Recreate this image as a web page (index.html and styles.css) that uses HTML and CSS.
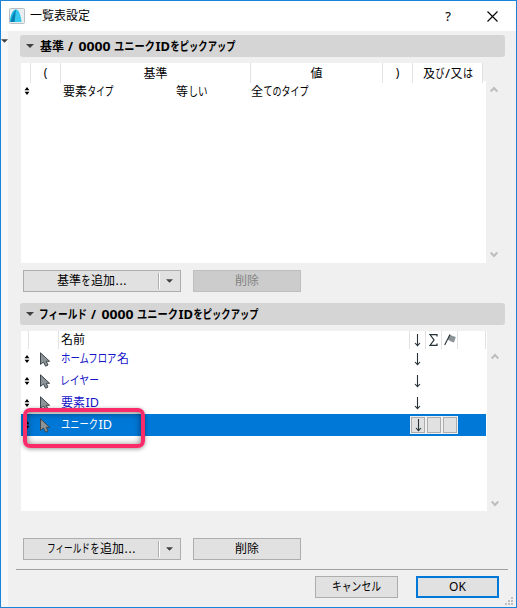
FILE: index.html
```
<!DOCTYPE html>
<html lang="ja">
<head>
<meta charset="utf-8">
<title>一覧表設定</title>
<link rel="stylesheet" href="styles.css">
</head>
<body>
<svg class="defs" width="0" height="0">
  <defs>
    <symbol id="updown" viewBox="0 0 6 10"><path d="M3 0L6 4H0zM0 6H6L3 10z" fill="#000"/></symbol>
    <symbol id="cursor" viewBox="0 0 11 15"><path d="M.5 .8V12.4L3.500 10L5.600 14.200L8 13L6.200 9.300H9.600z" fill="#8d9498" stroke="#3d474d" stroke-width="1"/></symbol>
    <symbol id="down" viewBox="0 0 7 13"><path d="M3.5 0V11.5M1 9L3.5 11.7L6 9" fill="none" stroke="#263238" stroke-width="1.1"/></symbol>
    <symbol id="tri" viewBox="0 0 8 4"><path d="M0 0H8L4 4z" fill="#404040"/></symbol>
    <symbol id="chev" viewBox="0 0 8 7"><path d="M.7 5.5L4 2L7.3 5.5" fill="none" stroke="#bdbdbd" stroke-width="2"/></symbol>
  </defs>
</svg>
<div class="window">
  <header class="titlebar">
    <svg class="logo" width="16" height="16" viewBox="0 0 16 16"><rect x=".5" y=".5" width="15" height="15" rx="1" fill="#e9eef0" stroke="#b9c0c3"/><path d="M1 14C1 7 4 1.5 7 1.5L8 14z" fill="#16b8e8"/><path d="M5 14C4.500 7 5.500 2 7 1.500C10 1.500 12 8 12.500 14z" fill="#35c7ee"/><path d="M1.500 14C3 9 5 4 7 1.500L5.500 14z" fill="#087fae"/></svg>
    <span class="title">一覧表設定</span>
    <span class="help">?</span>
    <svg class="close" width="11" height="11" viewBox="0 0 11 11"><path d="M.5 .5L10.500 10.500M10.500 .5L.5 10.500" stroke="#000" stroke-width="1.1"/></svg>
  </header>
  <div class="body">
    <aside class="rail"><svg width="7" height="4"><use href="#tri"/></svg></aside>
    <main class="content">
      <h2 class="section">
        <svg class="tri" width="8" height="4"><use href="#tri"/></svg>
        <svg class="label" width="220" height="20"><text x="0" y="15">基準</text><text x="28" y="15" textLength="7">/</text><text x="38.500" y="15" textLength="32" lengthAdjust="spacingAndGlyphs">0000</text><text x="74" y="15" textLength="41" lengthAdjust="spacingAndGlyphs">ユニーク</text><text x="115.500" y="15" textLength="14.500" lengthAdjust="spacingAndGlyphs">ID</text><text x="130.500" y="15" textLength="65" lengthAdjust="spacingAndGlyphs">をピックアップ</text></svg>
      </h2>
      <div class="panel criteria">
        <div class="sheet">
          <div class="cols">
            <span></span><span>(</span><span class="low">基準</span><span class="low">値</span><span>)</span>
            <span><svg class="label" width="50" height="18"><text x="0" y="14">及</text><text x="12.500" y="14" textLength="9" lengthAdjust="spacingAndGlyphs">び</text><text x="22" y="14" textLength="5" lengthAdjust="spacingAndGlyphs">/</text><text x="27.500" y="14">又</text><text x="40" y="14" textLength="10" lengthAdjust="spacingAndGlyphs">は</text></svg></span>
          </div>
          <div class="crow">
            <svg class="ud" width="6" height="8"><use href="#updown"/></svg>
            <svg class="label c1" width="80" height="20"><text x="0" y="15">要素</text><text x="24.500" y="15" textLength="26" lengthAdjust="spacingAndGlyphs">タイプ</text></svg>
            <svg class="label c2" width="60" height="20"><text x="0" y="15">等</text><text x="12.500" y="15" textLength="19" lengthAdjust="spacingAndGlyphs">しい</text></svg>
            <svg class="label c3" width="80" height="20"><text x="0" y="15">全</text><text x="12.500" y="15" textLength="45" lengthAdjust="spacingAndGlyphs">てのタイプ</text></svg>
          </div>
        </div>
        <div class="scroll"><svg width="8" height="7"><use href="#chev"/></svg><svg class="flip" width="8" height="7"><use href="#chev"/></svg></div>
      </div>
      <div class="actions">
        <button class="btn split"><span class="main"><svg class="label" width="68" height="20"><text x="0" y="14">基準</text><text x="24.500" y="14" textLength="9" lengthAdjust="spacingAndGlyphs">を</text><text x="34" y="14">追加</text><text x="58.500" y="14" textLength="11">...</text></svg></span><span class="drop"><svg width="7" height="4"><use href="#tri"/></svg></span></button>
        <button class="btn disabled" disabled>削除</button>
      </div>
      <h2 class="section">
        <svg class="tri" width="8" height="4"><use href="#tri"/></svg>
        <svg class="label" width="240" height="20"><text x="-1" y="15" textLength="48" lengthAdjust="spacingAndGlyphs">フィールド</text><text x="51" y="15" textLength="7">/</text><text x="61.500" y="15" textLength="32" lengthAdjust="spacingAndGlyphs">0000</text><text x="97" y="15" textLength="41" lengthAdjust="spacingAndGlyphs">ユニーク</text><text x="138.500" y="15" textLength="14.500" lengthAdjust="spacingAndGlyphs">ID</text><text x="153.500" y="15" textLength="65" lengthAdjust="spacingAndGlyphs">をピックアップ</text></svg>
      </h2>
      <div class="panel fields">
        <div class="sheet">
          <div class="cols">
            <span></span><span></span><span class="name">名前</span>
            <span><svg width="7" height="13"><use href="#down"/></svg></span>
            <span><svg width="9" height="12" viewBox="0 0 9 12"><path d="M8 2.500V.7H1L5 6L1 11.300H8V9.500" fill="none" stroke="#263238" stroke-width="1.200"/></svg></span>
            <span><svg width="12" height="12" viewBox="0 0 12 12"><path d="M5.500 .5L7.500 1.500L11.800 3L10 8.500L7 7.500L3.500 5.500z" fill="#8d9498"/><path d="M6 .5L.7 11" stroke="#263238" stroke-width="1.100"/></svg></span>
            <span></span>
          </div>
          <div class="frow"><svg class="ud" width="6" height="8"><use href="#updown"/></svg><svg class="cur" width="11" height="15"><use href="#cursor"/></svg><svg class="label" width="80" height="22"><text x="0" y="15" textLength="55.500" lengthAdjust="spacingAndGlyphs">ホームフロア</text><text x="56" y="15">名</text></svg><svg class="arr" width="7" height="13"><use href="#down"/></svg></div>
          <div class="frow"><svg class="ud" width="6" height="8"><use href="#updown"/></svg><svg class="cur" width="11" height="15"><use href="#cursor"/></svg><svg class="label" width="80" height="22"><text x="-1" y="15" textLength="39" lengthAdjust="spacingAndGlyphs">レイヤー</text></svg><svg class="arr" width="7" height="13"><use href="#down"/></svg></div>
          <div class="frow"><svg class="ud" width="6" height="8"><use href="#updown"/></svg><svg class="cur" width="11" height="15"><use href="#cursor"/></svg><svg class="label" width="80" height="22"><text x="0" y="15">要素</text><text x="24.500" y="15" textLength="13.500" lengthAdjust="spacingAndGlyphs">ID</text></svg><svg class="arr" width="7" height="13"><use href="#down"/></svg></div>
          <div class="frow selected"><svg class="ud" width="6" height="8"><use href="#updown"/></svg><svg class="cur" width="11" height="15"><use href="#cursor"/></svg><svg class="label" width="80" height="22"><text x="0" y="15" textLength="37" lengthAdjust="spacingAndGlyphs">ユニーク</text><text x="37.500" y="15" textLength="13.500" lengthAdjust="spacingAndGlyphs">ID</text></svg><div class="toggles"><i><svg width="7" height="13"><use href="#down"/></svg></i><i></i><i></i></div><div class="marker"></div></div>
        </div>
        <div class="scroll"><svg width="8" height="7"><use href="#chev"/></svg><svg class="flip" width="8" height="7"><use href="#chev"/></svg></div>
      </div>
      <div class="actions second">
        <button class="btn split"><span class="main"><svg class="label" width="88" height="20"><text x="0" y="14" textLength="43" lengthAdjust="spacingAndGlyphs">フィールド</text><text x="43.500" y="14" textLength="9" lengthAdjust="spacingAndGlyphs">を</text><text x="53" y="14">追加</text><text x="77.500" y="14" textLength="11">...</text></svg></span><span class="drop"><svg width="7" height="4"><use href="#tri"/></svg></span></button>
        <button class="btn">削除</button>
      </div>
      <footer>
        <button class="btn"><svg class="label" width="49" height="20"><text x="0" y="14" textLength="49" lengthAdjust="spacingAndGlyphs">キャンセル</text></svg></button>
        <button class="btn ok">OK</button>
      </footer>
    </main>
  </div>
  <svg class="grip" width="8" height="8" viewBox="0 0 8 8"><path d="M6 0h2v2H6zM3 3h2v2H3zM6 3h2v2H6zM0 6h2v2H0zM3 6h2v2H3zM6 6h2v2H6z" fill="#bfbfbf"/></svg>
</div>
</body>
</html>
```
FILE: styles.css
```
* { box-sizing: border-box; }
body { margin: 0; font: 12px/18px "Noto Sans", "Noto Sans CJK JP", sans-serif; color: #000; }
svg { display: block; flex: none; }
.defs { position: absolute; }
.window { position: relative; width: 517px; height: 608px; border: 1px solid #1883d7; background: #f0f0f0; overflow: hidden; }
.titlebar { display: flex; align-items: center; height: 30px; padding-left: 8px; background: #fff; }
.logo { margin-top: -1px; }
.title { margin-left: 5px; }
.help { margin-left: auto; margin-right: 36px; font-size: 13px; -webkit-text-stroke: .1px #000; }
.close { margin-right: 18px; }
.body { display: flex; height: 576px; }
.rail { width: 7px; background: #f7f7f7; padding-top: 8px; }
.content { width: 508px; padding: 4px 11px 0 12px; }
.section { display: flex; align-items: center; width: 485px; height: 22px; margin: 0; padding-left: 6px; border-radius: 3px; background: #d5d5d5; font-size: 12px; }
.section .label { margin-left: 6px; font-weight: 700; }
.label { overflow: visible; fill: currentColor; }
.panel { display: flex; margin: 6px 0 0 1px; }
.sheet { background: #fff; }
.scroll { display: flex; flex-direction: column; justify-content: space-between; padding-left: 4px; }
.flip { transform: scaleY(-1); }
.criteria { height: 200px; }
.criteria .sheet { width: 465px; }
.criteria .scroll { padding-top: 23px; padding-bottom: 5px; }
.cols { display: grid; }
.cols span { display: flex; align-items: center; justify-content: center; border-right: 1px solid #e2e2e2; }
.criteria .cols { width: 465px; height: 18px; grid-template-columns: 10px 30px 190px 132px 30px 70px; background: #f0f0f0; }
.criteria .cols span { background: #fff; }
.criteria .cols .low { padding-top: 2px; }
.crow { display: flex; align-items: center; height: 20px; padding-left: 3px; }
.c1 { margin-left: 33px; }
.c2 { margin-left: 33px; }
.c3 { margin-left: 15px; }
.actions { display: flex; gap: 12px; margin: 7px 0 11px 3px; }
.btn { display: flex; align-items: center; justify-content: center; width: 108px; height: 22px; padding: 0; border: 1px solid #adadad; background: #e1e1e1; color: #000; font: inherit; }
.split { width: 158px; }
.main { display: flex; justify-content: center; width: 134px; }
.drop { display: flex; align-items: center; justify-content: center; flex: 1; height: 16px; border-left: 1px solid #adadad; box-shadow: inset 1px 0 #fff; }
.disabled { background: #ccc; border-color: #bfbfbf; color: #838383; }
.fields { height: 180px; }
.fields .sheet { width: 466px; }
.fields .scroll { padding-top: 22px; padding-bottom: 4px; }
.fields .cols { width: 465px; height: 17px; grid-template-columns: 8px 30px 351px 16px 16px 16px 28px; }
.fields .cols .name { justify-content: flex-start; padding-left: 2px; }
.frow { position: relative; display: flex; align-items: center; width: 465px; height: 22px; padding-left: 3px; color: #1414c8; }
.cur { margin-left: 10px; }
.frow .label { margin-left: 10px; }
.arr { margin-left: 273px; }
.selected { background: #0078d7; color: #fff; }
.toggles { display: flex; margin-left: 269px; height: 18px; background: #f0f0f0; border: 1px solid #f0f0f0; }
.toggles i { display: flex; align-items: center; justify-content: center; width: 14px; height: 16px; border: 1px solid #adadad; background: #e1e1e1; }
.toggles i + i { margin-left: 2px; }
.marker { position: absolute; left: 2px; top: -6px; width: 122px; height: 40px; border: 4px solid #fb2b69; border-radius: 7px; box-shadow: 0 1px 4px #0006, inset 0 1px 7px #0008; }
.second { margin: 27px 0 0 3px; }
footer { display: flex; justify-content: flex-end; gap: 18px; width: 492px; height: 36px; margin: 9px 0 0 -4px; padding: 6px 9px 0 0; border-top: 1px solid #a0a0a0; }
footer .btn { width: 83px; }
.ok { border: 2px solid #0078d7; }
.grip { position: absolute; right: 3px; bottom: 2px; }
```
